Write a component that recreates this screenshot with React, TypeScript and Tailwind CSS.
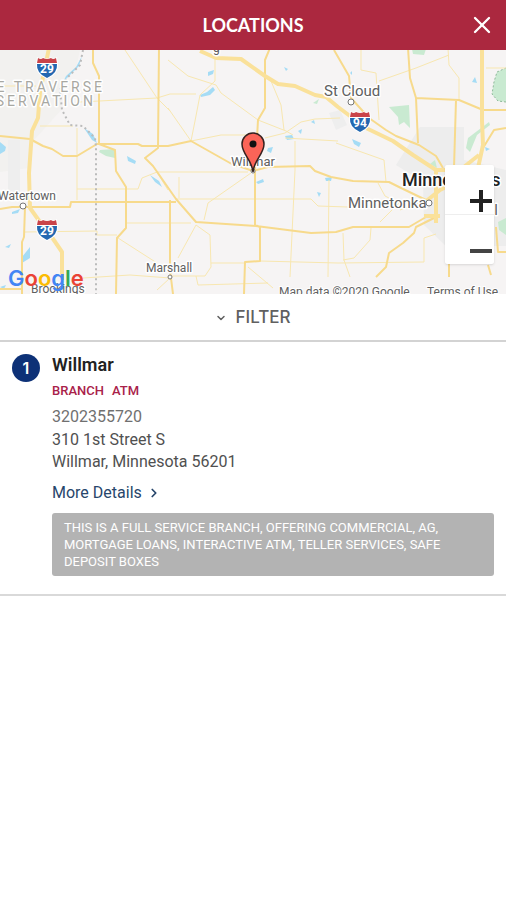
import { useState } from 'react';
import { ChevronDown, ChevronRight, X } from 'lucide-react';

interface BranchLocation {
  id: number;
  name: string;
  services: string[];
  phone: string;
  street: string;
  city: string;
  note: string;
}

const locations: BranchLocation[] = [
  {
    id: 1,
    name: 'Willmar',
    services: ['BRANCH', 'ATM'],
    phone: '3202355720',
    street: '310 1st Street S',
    city: 'Willmar, Minnesota 56201',
    note: 'THIS IS A FULL SERVICE BRANCH, OFFERING COMMERCIAL, AG, MORTGAGE LOANS, INTERACTIVE ATM, TELLER SERVICES, SAFE DEPOSIT BOXES'
  }
];

// Road geometry, grouped by how heavy the line is drawn
const localRoads = [
  'M125 50L157 98L170 111',
  'M80 102L157 98L170 94H196',
  'M40 126H73M0 86H36M77 128V200',
  'M77 189H138L142 178L157 172H248',
  'M24 232L97 231V235H117M127 223H191',
  'M118 238L157 263M83 278L130 275L170 278L157 290',
  'M153 166L168 190',
  'M168 60L188 76L216 85L221 93L258 120L286 131L293 135',
  'M215 58V81L200 95L195 121L191 141L168 108',
  'M191 141L221 135H257',
  'M271 81L281 105L284 130',
  'M265 138L285 133L301 122L315 119L340 118',
  'M285 138L338 141M295 141V170L290 277',
  'M329 180L328 277',
  'M176 199H311L318 206L348 207',
  'M251 173L208 203L204 220M179 177V198',
  'M260 261L338 263L424 262V238L436 234',
  'M178 258L196 225L210 235L211 267L205 276H171M211 263H245',
  'M196 276L198 285L268 283M248 267L273 288',
  'M361 48V70L376 73L379 120',
  'M379 81L416 68L449 55M448 48L449 65L459 78V100',
  'M486 68H506M336 143L384 160L386 182',
  'M343 233L344 260L350 277M371 228L370 240L354 258L343 260',
  'M378 183L385 196L399 203L380 222M400 210L426 200'
];

const mainRoads = [
  'M0 136L30 139L43 146L52 149L63 156H77L97 144H138L142 146H168L191 141L230 163L253 171L268 167L310 166L315 171L331 177L353 181L389 182L399 187L426 200',
  'M93 48V63L99 76V144L115 150L116 171L126 187V228L117 238L116 294',
  'M159 48L158 148L145 158L153 166L176 199L196 222L256 226L311 233L336 232L353 227H409L426 217',
  'M0 209L12 207H70L71 202H176M170 200V270L173 294',
  'M270 48L265 60V108L258 120L257 138L255 170V225L260 227V261L245 262L244 294',
  'M334 50L349 76L351 98L369 118L386 130L396 136L419 145L436 156L443 168',
  'M408 48L410 78L416 98L418 143',
  'M416 98L459 100L483 110H506M456 100L454 168',
  'M483 148L494 130L506 128',
  'M436 217L416 227L414 233L403 243L389 253L386 267L376 277',
  'M25 207L24 237L22 242V294M0 289H22',
  'M496 227L498 252H506M449 263V277M488 265L491 275'
];

const highways = [
  'M49 48L40 92L38 118L32 131L29 173L30 208L40 222L47 230L62 252V280',
  'M200 51L216 58L241 59L265 76L278 84L295 86L315 95L326 97L338 107L366 128L393 141L413 155L436 170L460 170L479 155',
  'M482 48V121L483 145L478 168',
  'M436 170V223M425 202L440 190L460 180M424 216H440'
];

const water = [
  'M0 142L6 147L5 151L0 154Z',
  'M82 56L79 66L63 82L66 76L76 67Z',
  'M84 128L93 134L97 143L92 140Z',
  'M127 156L136 161L135 164L128 161Z',
  'M208 72L214 70L213 74L208 76Z',
  'M200 95L207 92L213 87L215 90L210 95L201 97Z',
  'M285 136L292 135L294 139L287 140Z',
  'M268 148L273 147L271 153L267 151Z',
  'M298 131L302 129L301 134Z',
  'M311 122L314 120L315 124Z',
  'M284 67L288 69L286 71Z',
  'M256 182L263 179L264 182L258 184Z',
  'M317 192L321 193L319 197Z',
  'M325 178L332 177L331 181L326 181Z',
  'M150 175L159 181L162 187L155 182Z',
  'M22 257L30 247V258L22 263Z',
  'M5 247L11 244L9 248Z',
  'M12 212L20 209L18 213L12 214Z',
  'M0 287L6 285L4 289Z',
  'M352 139L361 143L359 147L354 144Z',
  'M472 82L475 77L477 83Z',
  'M350 73L352 71V75Z',
  'M485 147L490 149L486 151Z'
];

const parks = [
  'M100 150L115 149V158L106 156L99 152Z',
  'M389 107L409 105L410 128L404 122L399 125L398 117Z',
  'M497 72L506 68V102L498 101L492 94L494 82Z',
  'M466 148L468 138L489 122L490 125L477 135L470 152Z',
  'M412 49H426L424 55L413 54Z',
  'M430 164L435 160L437 168Z',
  'M313 103L319 99L317 104Z',
  'M498 222L506 218V235L499 230Z'
];

function InterstateShield({ x, y, route }: { x: number; y: number; route: string }) {
  return (
    <g transform={`translate(${x} ${y})`}>
      <path d="M-10 -11Q-6 -8 -4 -11Q0 -8 4 -11Q6 -8 10 -11L11 -4Q12 6 0 11Q-12 6 -11 -4Z" fill="#fff" />
      <path d="M-9 -10Q-6 -8 -4 -10Q0 -8 4 -10Q6 -8 9 -10L10 -5H-10Z" fill="#c94349" />
      <path d="M-10 -4H10Q11 5 0 10Q-11 5 -10 -4Z" fill="#2368b1" />
      <text x="0" y="5" textAnchor="middle" fontSize="12" fontWeight="700" fill="#fff">
        {route}
      </text>
    </g>
  );
}

function MapCanvas() {
  return (
    <svg
      viewBox="0 50 506 244"
      preserveAspectRatio="xMidYMid slice"
      className="block h-full w-full font-['Roboto',sans-serif]"
      role="img"
      aria-label="Map of Willmar, Minnesota"
    >
      <rect x="0" y="50" width="506" height="244" fill="#f6f4f4" />

      {/* Reservation and urban areas */}
      <path d="M0 50H80L76 68L61 86L62 109L34 140L29 168L0 172Z" fill="#f2f1ef" />
      <path d="M420 127H464V160L506 170V246H446L424 225L423 182L396 165Z" fill="#ededed" />
      <path d="M329 113L340 110L347 125L336 130ZM8 140H20V197H8Z" fill="#eeeeee" />

      <path d={parks.join('')} fill="#c9ead1" />
      <path d="M506 102L498 101L492 94L494 82L497 72L506 68" fill="none" stroke="#8fb99a" strokeDasharray="2 2" />
      <path d={water.join('')} fill="#a5dcf5" />

      <g fill="none" strokeLinejoin="round">
        <path d={localRoads.join('')} stroke="#f8e7b0" strokeWidth="1" />
        <path d={mainRoads.join('')} stroke="#f7da8c" strokeWidth="2" />
        <path d={highways.join('')} stroke="#fae19a" strokeWidth="4" />
        <path d="M83 50L80 65L67 78L60 90L62 110L70 125L83 126L95 138L96 146V294" stroke="#bbb" strokeWidth="2" strokeDasharray="2 3" />
      </g>

      <InterstateShield x={47} y={68} route="29" />
      <InterstateShield x={47} y={230} route="29" />
      <InterstateShield x={360} y={122} route="94" />

      {/* Town labels */}
      <g fill="#606060" stroke="#fff" strokeWidth="3" strokeLinejoin="round" paintOrder="stroke" fontSize="12">
        <g fill="#a8a8a2" fontSize="14" className="tracking-[3px]">
          <text x="105" y="92" textAnchor="end">LAKE TRAVERSE</text>
          <text x="96" y="106" textAnchor="end">RESERVATION</text>
        </g>
        <text x="324" y="96" fontSize="15">St Cloud</text>
        <text x="231" y="166" fontSize="13">Willmar</text>
        <text x="56" y="200" textAnchor="end">Watertown</text>
        <text x="348" y="208" fontSize="15">Minnetonka</text>
        <text x="402" y="186" fontSize="18" fontWeight="500" fill="#222">Minneapolis</text>
        <text x="498" y="215" textAnchor="end" fontSize="15">St Paul</text>
        <text x="146" y="272">Marshall</text>
        <text x="31" y="293">Brookings</text>
        <text x="213" y="52">g</text>
      </g>
      <g fill="#fff" stroke="#777" strokeWidth="1">
        <circle cx="351" cy="102" r="3" />
        <circle cx="23" cy="206" r="3" />
        <circle cx="429" cy="203" r="3" />
        <circle cx="170" cy="277" r="2" />
        <circle cx="253" cy="171" r="2" />
      </g>

      {/* Branch pin */}
      <path d="M253 172C252 160 242 154 242 144A11 11 0 0 1 264 144C264 154 254 160 253 172Z" fill="#fb6458" stroke="#35211f" strokeWidth="1.5" />
      <circle cx="253" cy="144" r="3.5" fill="#111" />

      <g fill="#606060" stroke="#fff" strokeWidth="2" paintOrder="stroke" fontSize="12">
        <text x="279" y="296">Map data ©2020 Google</text>
        <text x="427" y="296">Terms of Use</text>
      </g>
    </svg>
  );
}

function GoogleLogo() {
  return (
    <a href="#google" aria-label="Google" className="absolute bottom-0 left-2 font-['Inter',sans-serif] text-[22px] leading-8 font-semibold">
      <span className="text-[#4285f4]">G</span>
      <span className="text-[#ea4335]">o</span>
      <span className="text-[#fbbc05]">o</span>
      <span className="text-[#4285f4]">g</span>
      <span className="text-[#34a853]">l</span>
      <span className="text-[#ea4335]">e</span>
    </a>
  );
}

function LocationRow({ location }: { location: BranchLocation }) {
  return (
    <li className="flex gap-3 border-b-2 border-[#d9d9d9] px-3 pt-3 pb-[18px]">
      <span className="flex size-7 shrink-0 items-center justify-center rounded-full bg-[#0d3177] font-['Inter',sans-serif] text-base font-semibold text-white">
        {location.id}
      </span>
      <div className="min-w-0 flex-1">
        <h2 className="text-lg leading-[22px] font-semibold text-[#222]">{location.name}</h2>
        <p className="flex gap-2 pt-1 text-[13px] leading-[22px] font-medium text-[#a92149]">
          {location.services.map((service) => (
            <span key={service}>{service}</span>
          ))}
        </p>
        <p className="pt-1 pb-px text-base leading-[22px] text-[#707070]">{location.phone}</p>
        <address className="text-base leading-[22px] text-[#505050] not-italic">
          {location.street}
          <br />
          {location.city}
        </address>
        <a href="#details" className="flex items-center gap-[5px] pt-2 text-base leading-6 text-[#27466b]">
          More Details
          <ChevronRight className="size-[14px]" strokeWidth={3} />
        </a>
        <p className="mt-2 rounded-[3px] bg-[#b3b3b3] px-3 py-[6px] text-[13px] leading-[17px] text-white">
          {location.note}
        </p>
      </div>
    </li>
  );
}

export default function App() {
  const [filterOpen, setFilterOpen] = useState(false);

  return (
    <div className="min-h-screen bg-white font-['Roboto',sans-serif]">
      {/* Header */}
      <header className="relative flex h-[50px] items-center justify-center bg-[#ab283f] text-white">
        <h1 className="font-['Lato',sans-serif] text-lg font-bold">LOCATIONS</h1>
        <button type="button" aria-label="Close" className="absolute right-[6px] p-1">
          <X className="size-7" strokeWidth={2} />
        </button>
      </header>

      {/* Map */}
      <section className="relative h-[244px] overflow-hidden">
        <MapCanvas />
        <GoogleLogo />
        <div className="absolute right-3 bottom-[30px] flex w-[49px] flex-col rounded-xs bg-white text-[#222] shadow-sm">
          <button type="button" aria-label="Zoom in" className="flex h-[50px] items-end justify-end border-b border-[#eee] pr-px pb-[2px]">
            <svg viewBox="0 0 24 22" className="h-[22px] w-6" aria-hidden="true">
              <path d="M12 0V22M1 11H23" stroke="currentColor" strokeWidth="4" />
            </svg>
          </button>
          <button type="button" aria-label="Zoom out" className="flex h-[49px] items-end justify-end pr-px pb-[2px]">
            <svg viewBox="0 0 24 22" className="h-[22px] w-6 text-[#444]" aria-hidden="true">
              <path d="M1 11H23" stroke="currentColor" strokeWidth="4" />
            </svg>
          </button>
        </div>
      </section>

      {/* Filter */}
      <button
        type="button"
        aria-expanded={filterOpen}
        onClick={() => setFilterOpen(!filterOpen)}
        className="flex h-12 w-full items-center justify-center gap-2 border-b-2 border-[#d3d3d3] pt-[2px] font-['Inter',sans-serif] text-[17px] font-medium text-[#606060]"
      >
        <ChevronDown className="size-3" strokeWidth={3} />
        FILTER
      </button>

      <ul>
        {locations.map((location) => (
          <LocationRow key={location.id} location={location} />
        ))}
      </ul>
    </div>
  );
}
